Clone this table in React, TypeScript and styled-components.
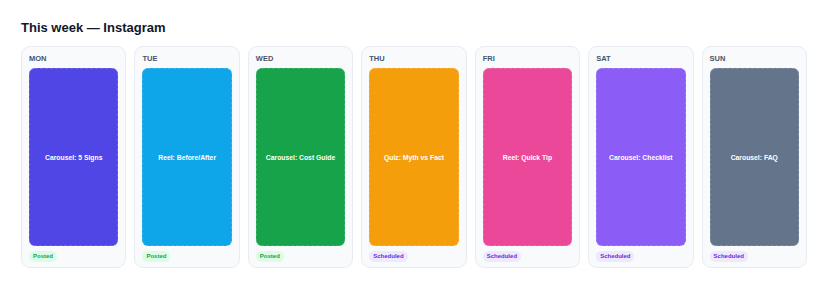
import React from "react";
import styled, { createGlobalStyle } from "styled-components";

const Global = createGlobalStyle`
  html, body { margin: 0; padding: 0; background: #ffffff; }
  body { font-family: "Liberation Sans", Arial, sans-serif; color: #0f172a; }
`;

const Page = styled.div`
  padding: 19px 21px 0 21px;
  width: 828px;
  box-sizing: border-box;
`;

const Title = styled.h2`
  margin: 0 0 10px 0;
  font-size: 13px;
  line-height: 17px;
  font-weight: 700;
  color: #0f172a;
`;

const Week = styled.div`
  display: grid;
  grid-template-columns: repeat(7, 1fr);
  gap: 8px;
`;

const Card = styled.div`
  background: #f8fafc;
  border: 1px solid #e8ecf2;
  border-radius: 9px;
  padding: 7px 7px 5px 6px;
  display: flex;
  flex-direction: column;
  gap: 4px;
`;

const Day = styled.div`
  font-size: 7.5px;
  font-weight: 700;
  color: #475569;
  line-height: 10px;
  padding-left: 1px;
  text-transform: uppercase;
`;

const Tile = styled.div<{ $bg: string }>`
  height: 178px;
  margin-left: 1px;
  background: ${(p) => p.$bg};
  border: 1px dashed rgba(255, 255, 255, 0.18);
  border-radius: 6px;
  box-sizing: border-box;
  display: flex;
  align-items: center;
  justify-content: center;
  color: #ffffff;
  font-size: 6.8px;
  font-weight: 700;
  text-align: center;
  padding: 0 4px;
`;

const Badge = styled.span<{ $posted: boolean }>`
  align-self: flex-start;
  margin-top: 1px;
  margin-left: 1px;
  padding: 0 4px;
  height: 11px;
  line-height: 11px;
  border-radius: 6px;
  font-size: 6px;
  font-weight: 700;
  background: ${(p) => (p.$posted ? "#dcfce7" : "#ede9fe")};
  color: ${(p) => (p.$posted ? "#16a34a" : "#6d28d9")};
`;

const days = [
  { d: "Mon", t: "Carousel: 5 Signs", c: "#4f46e5", posted: true },
  { d: "Tue", t: "Reel: Before/After", c: "#0ea5e9", posted: true },
  { d: "Wed", t: "Carousel: Cost Guide", c: "#16a34a", posted: true },
  { d: "Thu", t: "Quiz: Myth vs Fact", c: "#f59e0b", posted: false },
  { d: "Fri", t: "Reel: Quick Tip", c: "#ec4899", posted: false },
  { d: "Sat", t: "Carousel: Checklist", c: "#8b5cf6", posted: false },
  { d: "Sun", t: "Carousel: FAQ", c: "#64748b", posted: false },
];

export default function App() {
  return (
    <Page>
      <Global />
      <Title>This week — Instagram</Title>
      <Week>
        {days.map((x) => (
          <Card key={x.d}>
            <Day>{x.d}</Day>
            <Tile $bg={x.c}>{x.t}</Tile>
            <Badge $posted={x.posted}>{x.posted ? "Posted" : "Scheduled"}</Badge>
          </Card>
        ))}
      </Week>
    </Page>
  );
}
